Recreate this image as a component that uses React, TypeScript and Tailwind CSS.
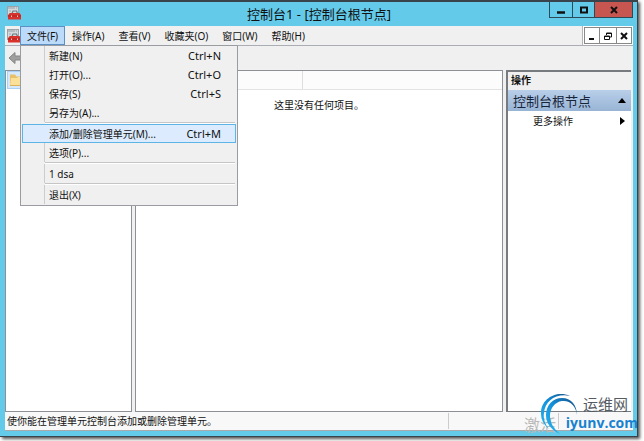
import { FC, ReactNode, useState } from 'react';

type MenuEntry =
  | { type: 'item'; label: string; shortcut?: string }
  | { type: 'separator' };

const fileMenu: MenuEntry[] = [
  { type: 'item', label: '新建(N)', shortcut: 'Ctrl+N' },
  { type: 'item', label: '打开(O)...', shortcut: 'Ctrl+O' },
  { type: 'item', label: '保存(S)', shortcut: 'Ctrl+S' },
  { type: 'item', label: '另存为(A)...' },
  { type: 'separator' },
  { type: 'item', label: '添加/删除管理单元(M)...', shortcut: 'Ctrl+M' },
  { type: 'item', label: '选项(P)...' },
  { type: 'separator' },
  { type: 'item', label: '1 dsa' },
  { type: 'separator' },
  { type: 'item', label: '退出(X)' },
];

const otherMenus = ['操作(A)', '查看(V)', '收藏夹(O)', '窗口(W)', '帮助(H)'];

const ToolboxIcon: FC = () => (
  <svg width="14" height="14" viewBox="0 0 14 14" className="shrink-0">
    <rect x="0.5" y="0.5" width="11" height="10" fill="#d5dadd" stroke="#99a3a8" />
    <rect x="1" y="1" width="10" height="2" fill="#b4bcc1" />
    <path d="M8 2h1M10 2h1" stroke="#eef1f2" />
    <path d="M2 5h2M2 7.5h1" stroke="#a0a9ae" />
    <path d="M5 7.5L6 5h3.5l1 2.5" fill="none" stroke="#6b767c" strokeWidth="1.2" />
    <path d="M3 7h9.5L14 9v4.5H1V9z" fill="#d8322d" />
    <path d="M1 10h13" stroke="#b32120" />
    <path d="M4.5 9.5v1.5M10.5 9.5v1.5" stroke="#f0c9c5" />
  </svg>
);

const FolderIcon: FC = () => (
  <svg width="16" height="14" viewBox="0 0 16 14" className="shrink-0">
    <path d="M1 1.5h5l1.5 2H15V13H1z" fill="#e8c068" />
    <path d="M2 5h6l1-1h6v9H1z" fill="#fbe09a" />
    <path d="M1 12.5h14" stroke="#dcb259" />
  </svg>
);

const BackIcon: FC = () => (
  <svg width="14" height="14" viewBox="0 0 14 14">
    <path d="M1 7l6-5.5V5h7v4H7v3.5z" fill="#9f9f9f" stroke="#858585" />
  </svg>
);

const SiteLogo: FC = () => (
  <div className="pointer-events-none absolute right-1.5 bottom-1.5 flex items-start">
    <svg width="40" height="42" viewBox="0 0 40 42" className="-mr-3.5 shrink-0">
      <defs>
        <linearGradient id="ring" x1="0" y1="1" x2="1" y2="0">
          <stop offset="0" stopColor="#28b4ee" />
          <stop offset="0.5" stopColor="#1492dc" />
          <stop offset="1" stopColor="#174f86" />
        </linearGradient>
      </defs>
      <path d="M30 3C16-3 1 6 1 20c0 7 3 12 8 16C5 31 3 26 4 20 5 8 16 0 30 3z" fill="url(#ring)" />
      <path
        d="M37 22C37 12 31 5 22 5 13 5 6 12 6 22c0 8 5 15 14 19-6-5-10-11-10-18C10 15 15 9 22 8c8-1 14 5 15 14z"
        fill="url(#ring)"
      />
    </svg>
    <div className="flex flex-col items-end pt-[3px]">
      <span className="pr-2.5 font-['Liberation_Sans','Noto_Sans_CJK_SC',sans-serif] text-[15px] leading-[18px] text-[#555b63]">
        运维网
      </span>
      <span className="font-['Open_Sans',sans-serif] text-[14px] leading-[18px] font-bold text-[#1782d0]">iyunv.com</span>
    </div>
  </div>
);

const CaptionButton: FC<{ label: string; className: string; children: ReactNode }> = ({ label, className, children }) => (
  <button aria-label={label} className={`flex items-center justify-center ${className}`}>
    <svg width="10" height="10" viewBox="0 0 10 10" fill="none" stroke="#111">
      {children}
    </svg>
  </button>
);

const FileMenu: FC = () => (
  <div className="absolute top-full left-0 z-10 w-[218px] border border-[#999ca1] bg-[#f0f0f0] pb-px">
    {fileMenu.map((entry, index) => {
      if (entry.type === 'separator') {
        return <div key={index} className="mr-0.5 ml-6 h-0.5 border-t border-[#c5c5c5] bg-white" />;
      }
      const active = entry.shortcut === 'Ctrl+M';
      return (
        <button key={index} className="flex h-[19px] w-full px-px text-left">
          <span
            className={`flex h-full w-full items-center border pr-3.5 ${
              active ? 'border-[#5cb5e6] bg-[#dcebfd]' : 'border-transparent'
            }`}
          >
            <span className={`h-[19px] w-[22px] shrink-0 border-r ${active ? 'border-transparent' : 'border-[#cccccc]'}`} />
            <span className="flex-1 pl-1">{entry.label}</span>
            {entry.shortcut && <span className="text-[11px]">{entry.shortcut}</span>}
          </span>
        </button>
      );
    })}
  </div>
);

export default function App() {
  const [menuOpen, setMenuOpen] = useState(true);

  return (
    <div className="relative h-screen overflow-hidden bg-white pr-1.5 pb-1 font-['Noto_Sans','Noto_Sans_CJK_SC',sans-serif] text-[10px] leading-4 text-[#111]">
      <div className="flex h-full flex-col border-t-2 border-r border-b border-[#38434c] bg-[#64caea] pr-1 pb-[5px] pl-[5px] shadow-[2px_2px_3px_#555]">
        <header className="relative flex h-6 shrink-0 items-center justify-center text-[13px]">
          <div className="absolute top-1 left-0.5">
            <ToolboxIcon />
          </div>
          <h1>控制台1 - [控制台根节点]</h1>
          <div className="absolute top-0 right-0 flex h-4 border border-t-0 border-[#2c4b59]">
            <CaptionButton label="最小化" className="w-[23px] border-r border-[#2c4b59]">
              <path d="M1 7.5h8" strokeWidth="2.5" />
            </CaptionButton>
            <CaptionButton label="最大化" className="w-[22px] border-r border-[#2c4b59]">
              <path d="M2 2.5h6v5H2z" strokeWidth="2" />
            </CaptionButton>
            <CaptionButton label="关闭" className="w-[37px] bg-[#c6564f]">
              <path d="M2 2l6 6M8 2l-6 6" strokeWidth="2" />
            </CaptionButton>
          </div>
        </header>

        <div className="flex min-h-0 flex-1 flex-col bg-[#f0f0f0]">
          <nav className="flex h-5 shrink-0 border-b border-[#aaaeb4]">
            <div className="flex w-[15px] items-center pl-0.5">
              <ToolboxIcon />
            </div>
            <div className="relative">
              <button
                aria-expanded={menuOpen}
                onClick={() => setMenuOpen(!menuOpen)}
                className="h-full w-[45px] border border-[#5c91c5] bg-[#bcdafa]"
              >
                文件(F)
              </button>
              {menuOpen && <FileMenu />}
            </div>
            {otherMenus.map(name => (
              <button key={name} className="px-[7px]">
                {name}
              </button>
            ))}
            <div className="ml-auto flex border-l border-[#b5b5b5] bg-white p-px">
              <CaptionButton label="最小化子窗口" className="w-4 border border-[#888]">
                <path d="M2 8h5" strokeWidth="2" />
              </CaptionButton>
              <CaptionButton label="还原子窗口" className="w-4 border-y border-[#888]">
                <path d="M3.5 4V2h5v4h-2M1.5 5h5v3.5h-5zM3 2.5h6M1 5.5h6" />
              </CaptionButton>
              <CaptionButton label="关闭子窗口" className="w-4 border border-[#888]">
                <path d="M2 2l6 6M8 2l-6 6" strokeWidth="2" />
              </CaptionButton>
            </div>
          </nav>

          <div className="flex h-6 shrink-0 items-center pl-[3px]">
            <button aria-label="后退">
              <BackIcon />
            </button>
          </div>

          <main className="flex min-h-0 flex-1">
            <section className="w-[127px] shrink-0 border border-[#8d9097] bg-white">
              <button aria-label="控制台根节点" className="ml-px flex h-[18px] w-28 items-center border border-[#a9d1f5] bg-[#d6e9fc] pl-px">
                <FolderIcon />
              </button>
            </section>
            <section className="ml-[3px] min-w-0 flex-1 border border-[#8d9097] bg-white">
              <div className="h-[19px] border-b border-[#e3e3e3] bg-[#fcfcfc]">
                <div className="h-full w-[167px] border-r border-[#dedede]" />
              </div>
              <p className="pt-[7px] text-center">这里没有任何项目。</p>
            </section>
            <aside className="mr-0.5 ml-[3px] w-[125px] shrink-0 border-t-2 border-b border-l-2 border-[#777b80] bg-white">
              <h2 className="h-[18px] bg-[#f0f0f0] pl-[3px] font-bold">操作</h2>
              <button className="flex h-[21px] w-full items-center justify-between bg-linear-to-b from-[#b9cfe9] to-[#98b4d5] px-[5px] text-[13px] text-[#17243a]">
                控制台根节点
                <svg width="8" height="5" viewBox="0 0 8 5">
                  <path d="M0 5l4-5 4 5z" />
                </svg>
              </button>
              <button className="flex h-5 w-full items-center justify-between pr-1.5 pl-[25px]">
                更多操作
                <svg width="5" height="8" viewBox="0 0 5 8">
                  <path d="M0 0l5 4-5 4z" />
                </svg>
              </button>
            </aside>
          </main>

          <footer className="flex h-[19px] shrink-0 items-center border-b border-[#aaa] bg-[#f8f8f8] pl-0.5">
            <span>使你能在管理单元控制台添加或删除管理单元。</span>
            <div className="ml-auto flex h-4 w-[185px] border-l border-[#ccc]">
              <span className="ml-[75px] pt-1 text-base leading-4 text-[#b8b8b8]">激活</span>
              <span className="ml-0.5 h-full border-l border-[#ccc]" />
            </div>
          </footer>
        </div>
      </div>
      <SiteLogo />
    </div>
  );
}
